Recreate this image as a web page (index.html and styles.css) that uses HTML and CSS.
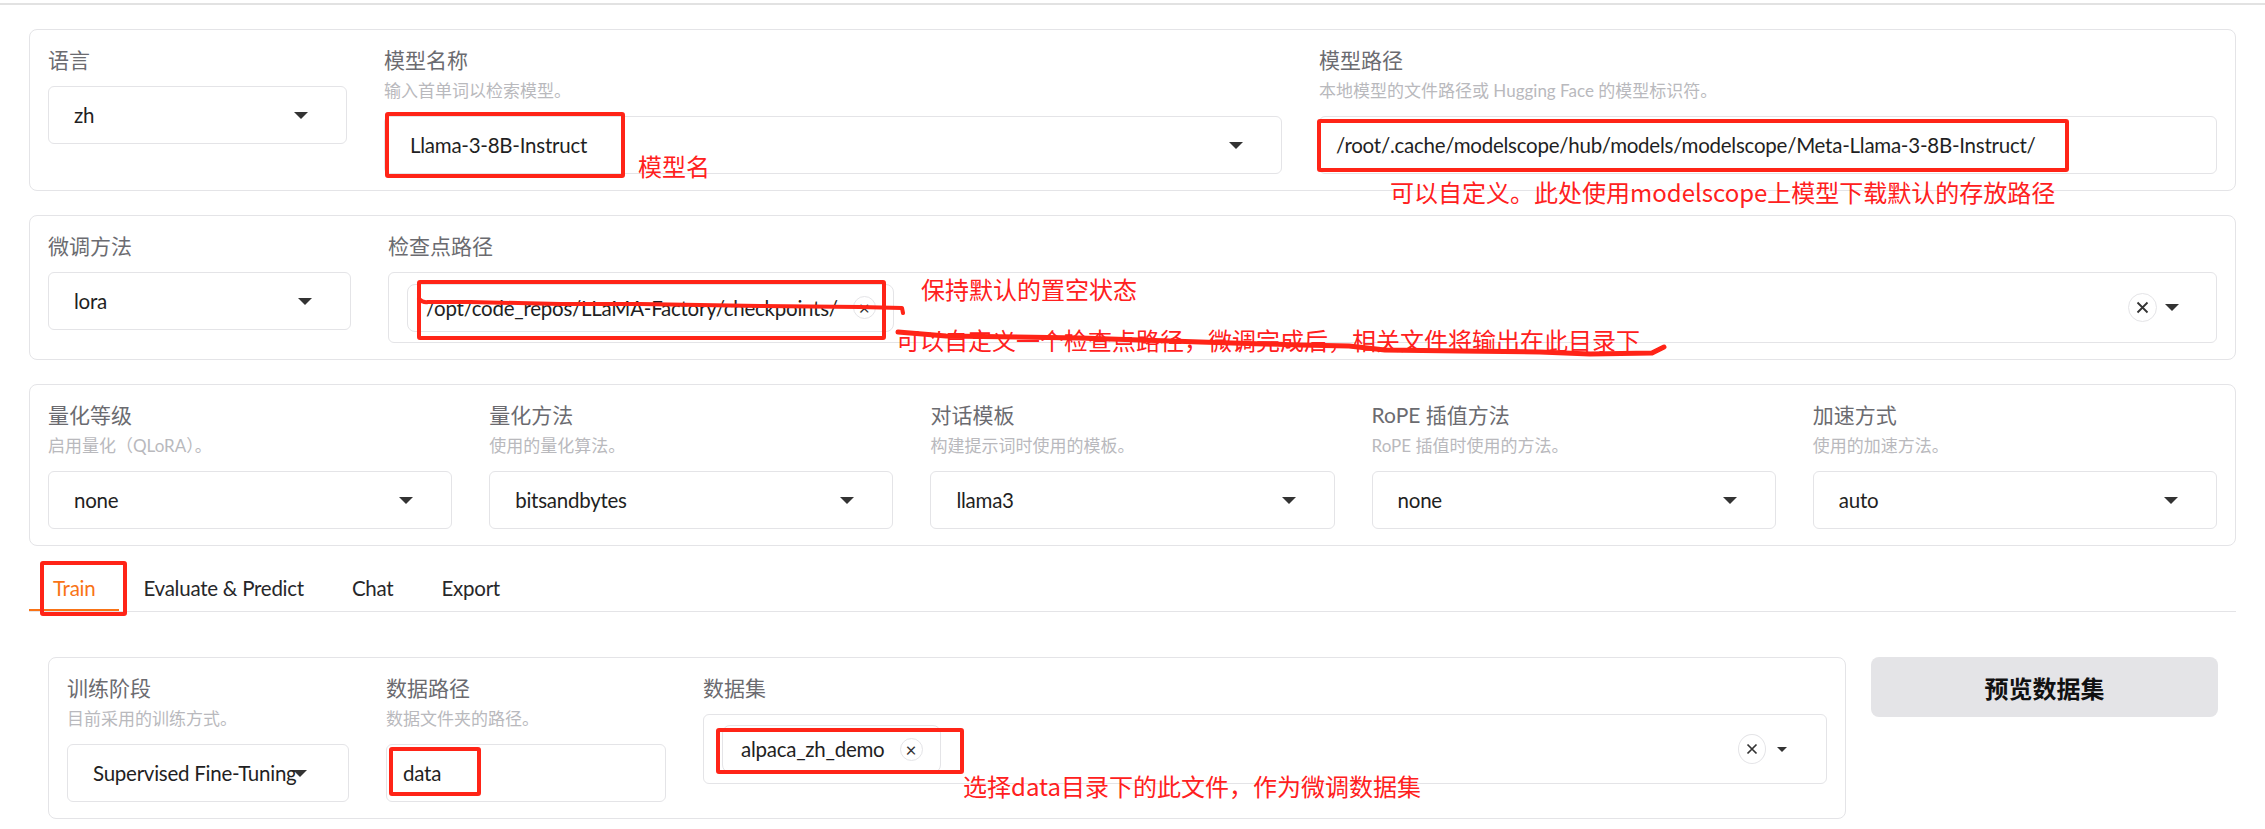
FILE: index.html
```html
<!DOCTYPE html>
<html lang="zh">
<head>
<meta charset="utf-8">
<title>LLaMA Board</title>
<link rel="stylesheet" href="styles.css">
</head>
<body>
<div class="topline"></div>
<main class="app">
  <section class="card">
    <div class="field w-lang">
      <div class="lbl">语言</div>
      <div class="box select"><span class="val">zh</span><i class="caret"></i></div>
    </div>
    <div class="field grow">
      <div class="lbl has-info">模型名称</div>
      <div class="info">输入首单词以检索模型。</div>
      <div class="box select"><span class="val">Llama-3-8B-Instruct</span><i class="caret"></i></div>
    </div>
    <div class="field grow">
      <div class="lbl has-info">模型路径</div>
      <div class="info">本地模型的文件路径或 Hugging Face 的模型标识符。</div>
      <div class="box text"><span class="val">/root/.cache/modelscope/hub/models/modelscope/Meta-Llama-3-8B-Instruct/</span></div>
    </div>
  </section>

  <section class="card">
    <div class="field w-method">
      <div class="lbl">微调方法</div>
      <div class="box select"><span class="val">lora</span><i class="caret"></i></div>
    </div>
    <div class="field grow">
      <div class="lbl">检查点路径</div>
      <div class="box multi ckpt">
        <div class="chip"><span>/opt/code_repos/LLaMA-Factory/checkpoints/</span><span class="chip-x">×</span></div>
        <span class="spacer"></span>
        <span class="clear"><svg width="13" height="13" viewBox="0 0 13 13"><path d="M1.5 1.5L11.5 11.5M11.5 1.5L1.5 11.5" stroke="#333" stroke-width="1.8" fill="none"/></svg></span>
        <i class="caret"></i>
      </div>
    </div>
  </section>

  <section class="card">
    <div class="field grow">
      <div class="lbl has-info">量化等级</div>
      <div class="info">启用量化（QLoRA）。</div>
      <div class="box select"><span class="val">none</span><i class="caret"></i></div>
    </div>
    <div class="field grow">
      <div class="lbl has-info">量化方法</div>
      <div class="info">使用的量化算法。</div>
      <div class="box select"><span class="val">bitsandbytes</span><i class="caret"></i></div>
    </div>
    <div class="field grow">
      <div class="lbl has-info">对话模板</div>
      <div class="info">构建提示词时使用的模板。</div>
      <div class="box select"><span class="val">llama3</span><i class="caret"></i></div>
    </div>
    <div class="field grow">
      <div class="lbl has-info">RoPE 插值方法</div>
      <div class="info">RoPE 插值时使用的方法。</div>
      <div class="box select"><span class="val">none</span><i class="caret"></i></div>
    </div>
    <div class="field grow">
      <div class="lbl has-info">加速方式</div>
      <div class="info">使用的加速方法。</div>
      <div class="box select"><span class="val">auto</span><i class="caret"></i></div>
    </div>
  </section>

  <nav class="tabs">
    <div class="tab active">Train</div>
    <div class="tab">Evaluate &amp; Predict</div>
    <div class="tab">Chat</div>
    <div class="tab">Export</div>
  </nav>

  <div class="tab-body">
    <section class="card train">
      <div class="field w-stage">
        <div class="lbl has-info">训练阶段</div>
        <div class="info">目前采用的训练方式。</div>
        <div class="box select stage"><span class="val">Supervised Fine-Tuning</span><i class="caret"></i></div>
      </div>
      <div class="field w-data">
        <div class="lbl has-info">数据路径</div>
        <div class="info">数据文件夹的路径。</div>
        <div class="box text"><span class="val">data</span></div>
      </div>
      <div class="field grow">
        <div class="lbl">数据集</div>
        <div class="box multi dataset">
          <div class="chip"><span>alpaca_zh_demo</span><span class="chip-x">×</span></div>
          <span class="spacer"></span>
          <span class="clear small"><svg width="12" height="12" viewBox="0 0 12 12"><path d="M1.5 1.5L10.5 10.5M10.5 1.5L1.5 10.5" stroke="#333" stroke-width="1.7" fill="none"/></svg></span>
          <i class="caret small"></i>
        </div>
      </div>
    </section>
    <div class="btn">预览数据集</div>
  </div>
</main>

<div class="annot">
  <div class="rb rb1"></div>
  <div class="rb rb2"></div>
  <div class="rb rb3"></div>
  <div class="rb rb4"></div>
  <div class="rb rb5"></div>
  <div class="rb rb6"></div>
  <div class="note n1">模型名</div>
  <div class="note n2">可以自定义。此处使用modelscope上模型下载默认的存放路径</div>
  <div class="note n3">保持默认的置空状态</div>
  <div class="note n4">可以自定义一个检查点路径，微调完成后，相关文件将输出在此目录下</div>
  <div class="note n5">选择data目录下的此文件，作为微调数据集</div>
  <svg class="strokes" width="2265" height="829" viewBox="0 0 2265 829">
    <path d="M419 299 Q423 303 428 302 L470 302 L560 304 L640 304 L760 306 L860 307 L902 308 L903 313" />
    <path class="thick" d="M898 332 L946 336 L1080 338 L1200 342 L1300 345 L1349 346 L1385 350 L1460 351 L1540 352 L1590 354 L1652 353 L1664 347" />
  </svg>
</div>
</body>
</html>
```

FILE: styles.css
```css
* { box-sizing: border-box; }

body {
  margin: 0;
  width: 2265px;
  height: 829px;
  overflow: hidden;
  position: relative;
  background: #ffffff;
  font-family: "Lato", "Noto Sans CJK SC", sans-serif;
  color: #27272a;
}

.topline {
  margin-top: 3px;
  height: 2px;
  background: #e2e2e2;
}

.app {
  padding: 24px 29px 0;
}

.card {
  border: 1px solid #e4e4e7;
  border-radius: 8px;
  padding: 18px 18px 16px;
  display: flex;
  gap: 37px;
  align-items: flex-start;
  background: #fff;
}

.card + .card {
  margin-top: 24px;
}

.field {
  display: flex;
  flex-direction: column;
  min-width: 0;
}

.grow { flex: 1; }
.w-lang { width: 299px; }
.w-method { width: 303px; }
.w-stage { width: 282px; }
.w-data { width: 280px; }

.lbl {
  font-size: 21px;
  line-height: 24px;
  color: #6b6b70;
  margin-bottom: 14px;
  white-space: nowrap;
}

.lbl.has-info { margin-bottom: 7px; }

.info {
  font-size: 17px;
  line-height: 24px;
  color: #b9b9bd;
  margin-bottom: 13px;
  white-space: nowrap;
}

.box {
  height: 58px;
  border: 1px solid #e4e4e7;
  border-radius: 6px;
  display: flex;
  align-items: center;
  font-size: 20.5px;
  letter-spacing: -0.25px;
  color: #1f1f23;
  background: #fff;
}

.select { padding: 0 38px 0 25px; }
.select.stage { padding-right: 28px; }

.val {
  flex: 1;
  min-width: 0;
  overflow: hidden;
  white-space: nowrap;
}

.stage .val {
  flex: none;
  overflow: visible;
}

.caret {
  flex: none;
  width: 0;
  height: 0;
  border-left: 7px solid transparent;
  border-right: 7px solid transparent;
  border-top: 7px solid #333;
}

.stage .caret { margin-left: -4px; }

.caret.small {
  border-left-width: 5px;
  border-right-width: 5px;
  border-top-width: 5px;
}

.text { padding: 0 16px; }

.multi {
  padding: 0 37px 0 18px;
}

.ckpt { height: 71px; }
.dataset { height: 70px; padding-right: 39px; }

.chip {
  height: 48px;
  border: 1px solid #e4e4e7;
  border-radius: 8px;
  padding: 0 17px 0 18px;
  display: flex;
  align-items: center;
  gap: 15px;
  white-space: nowrap;
}

.chip-x {
  width: 23px;
  height: 23px;
  border: 1px solid #e4e4e7;
  border-radius: 50%;
  display: flex;
  align-items: center;
  justify-content: center;
  font-size: 19px;
  line-height: 1;
  letter-spacing: 0;
  color: #333;
}

.spacer { flex: 1; }

.clear {
  width: 29px;
  height: 29px;
  border: 1px solid #e4e4e7;
  border-radius: 50%;
  display: flex;
  align-items: center;
  justify-content: center;
  margin-right: 8px;
  flex: none;
}

.clear.small {
  width: 28px;
  height: 30px;
  margin-right: 11px;
}

.tabs {
  margin-top: 19px;
  display: flex;
  border-bottom: 1px solid #e4e4e7;
}

.tab {
  height: 46px;
  padding: 0 24px;
  display: flex;
  align-items: center;
  font-size: 20.5px;
  letter-spacing: -0.25px;
  color: #27272a;
  white-space: nowrap;
}

.tab.active {
  color: #f97316;
  box-shadow: inset 0 -2px 0 #f97316;
}

.tab-body {
  padding: 45px 18px 0 19px;
  display: flex;
  gap: 25px;
  align-items: flex-start;
}

.train { flex: 1; }

.btn {
  width: 347px;
  height: 60px;
  background: #e4e4e7;
  border-radius: 8px;
  display: flex;
  align-items: center;
  justify-content: center;
  font-size: 24px;
  font-weight: 700;
  color: #111;
}

/* screenshot annotations, drawn over the UI */
.annot {
  position: absolute;
  left: 0;
  top: 0;
  width: 2265px;
  height: 829px;
  pointer-events: none;
}

.rb {
  position: absolute;
  border: 4px solid #ff2417;
  border-radius: 3px;
}

.rb1 { left: 385px; top: 112px; width: 240px; height: 66px; }
.rb2 { left: 1317px; top: 119px; width: 752px; height: 53px; }
.rb3 { left: 417px; top: 280px; width: 469px; height: 60px; }
.rb4 { left: 40px; top: 561px; width: 87px; height: 55px; }
.rb5 { left: 389px; top: 747px; width: 92px; height: 49px; }
.rb6 { left: 716px; top: 728px; width: 248px; height: 46px; }

.note {
  position: absolute;
  font-family: "Noto Sans CJK SC", sans-serif;
  font-size: 24px;
  line-height: 1;
  color: #ff2020;
  white-space: nowrap;
}

.n1 { left: 638px; top: 154px; }
.n2 { left: 1390px; top: 180px; }
.n3 { left: 921px; top: 277px; }
.n4 { left: 896px; top: 328px; }
.n5 { left: 963px; top: 774px; }

.strokes {
  position: absolute;
  left: 0;
  top: 0;
}

.strokes path {
  fill: none;
  stroke: #ff2417;
  stroke-width: 4;
  stroke-linecap: round;
  stroke-linejoin: round;
}

.strokes path.thick { stroke-width: 5; }
```
